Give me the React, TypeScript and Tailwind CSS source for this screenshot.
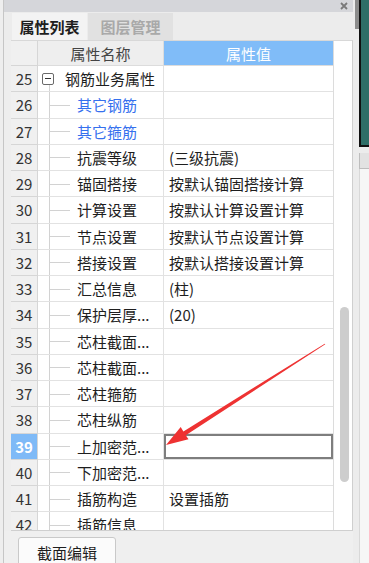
import React from 'react';

type Row = { n: number; name: string; value?: string; group?: boolean; blue?: boolean; selected?: boolean };

const rows: Row[] = [
  { n: 25, name: '钢筋业务属性', group: true },
  { n: 26, name: '其它钢筋', blue: true },
  { n: 27, name: '其它箍筋', blue: true },
  { n: 28, name: '抗震等级', value: '(三级抗震)' },
  { n: 29, name: '锚固搭接', value: '按默认锚固搭接计算' },
  { n: 30, name: '计算设置', value: '按默认计算设置计算' },
  { n: 31, name: '节点设置', value: '按默认节点设置计算' },
  { n: 32, name: '搭接设置', value: '按默认搭接设置计算' },
  { n: 33, name: '汇总信息', value: '(柱)' },
  { n: 34, name: '保护层厚...', value: '(20)' },
  { n: 35, name: '芯柱截面...' },
  { n: 36, name: '芯柱截面...' },
  { n: 37, name: '芯柱箍筋' },
  { n: 38, name: '芯柱纵筋' },
  { n: 39, name: '上加密范...', selected: true },
  { n: 40, name: '下加密范...' },
  { n: 41, name: '插筋构造', value: '设置插筋' },
  { n: 42, name: '插筋信息' },
];

function DataRow({ r }: { r: Row }) {
  return (
    <div className="flex h-[26.25px] shrink-0">
      <div
        className={
          'w-[27px] shrink-0 flex items-center justify-center border-r border-b border-[#d6d6d6] leading-none ' +
          (r.selected ? 'bg-[#7fbaf7] text-white font-semibold' : 'bg-[#f0f0f0] text-[#333]')
        }
      >
        {r.n}
      </div>
      <div className="w-[126px] shrink-0 relative flex items-center border-r border-b border-[#e2e2e2] leading-none">
        {r.group ? (
          <>
            <div className="absolute left-[4px] top-1/2 -translate-y-1/2 w-[12px] h-[12px] border border-[#6a6a6a] rounded-[2px] bg-white flex items-center justify-center">
              <div className="w-[6px] h-px bg-[#333]" />
            </div>
            <div className="absolute left-[11px] top-[19px] bottom-0 w-px bg-[#d2d2d2]" />
            <span className="pl-[27px] text-[#1e1e1e]">{r.name}</span>
          </>
        ) : (
          <>
            <div className="absolute left-[11px] top-0 bottom-0 w-px bg-[#d2d2d2]" />
            <div className="absolute left-[12px] top-1/2 w-[20px] h-px bg-[#d2d2d2]" />
            <span className={'pl-[39px] ' + (r.blue ? 'text-[#3570ee]' : 'text-[#1e1e1e]')}>{r.name}</span>
          </>
        )}
      </div>
      <div
        className={
          'w-[169px] shrink-0 flex items-center pl-[5px] border-b border-[#e2e2e2] leading-none text-[#1e1e1e] ' +
          (r.selected ? 'shadow-[inset_0_0_0_2px_#7e7e7e]' : '')
        }
      >
        {r.value ?? ''}
      </div>
    </div>
  );
}

export default function App() {
  return (
    <div className="relative w-[369px] h-[563px] overflow-hidden flex bg-[#ececec] text-[15px] font-['Noto_Sans_CJK_SC','Noto_Sans',sans-serif]">
      {/* left panel */}
      <div className="w-[353px] h-full pl-[3px] bg-[#eeeeee] shrink-0">
        <div className="h-full border-l border-[#c6c6c6] flex flex-col">
          {/* title bar */}
          <div className="h-[12px] shrink-0 bg-[#d5d6da] flex justify-end items-center pr-[5px]">
            <svg width="8" height="8" viewBox="0 0 8 8">
              <path d="M1 1 L7 7 M7 1 L1 7" stroke="#7a7a7a" strokeWidth="1.8" />
            </svg>
          </div>
          {/* tabs */}
          <div className="h-[28px] shrink-0 bg-[#ececec] flex items-stretch pl-[8px] pt-[1px]">
            <div className="w-[75px] flex items-center justify-center bg-[#f3f3f3] font-bold text-[#1e1e1e] leading-none">
              属性列表
            </div>
            <div className="w-[85px] ml-[1px] flex items-center justify-center bg-[#e1e1e1] font-bold text-[#a9a9a9] leading-none">
              图层管理
            </div>
          </div>
          {/* table */}
          <div className="flex-1 min-h-0 pl-[7px] flex">
            <div className="flex-1 flex border-t border-r border-b border-[#cfcfcf] border-t-[#d8d8d8] bg-white overflow-hidden">
              <div className="w-[322px] shrink-0 flex flex-col">
                <div className="flex h-[25px] shrink-0">
                  <div className="w-[27px] shrink-0 bg-[#f0f0f0] border-r border-b border-[#d6d6d6]" />
                  <div className="w-[126px] shrink-0 bg-[#eeeeee] border-r border-b border-[#dcdcdc] flex items-center justify-center text-[#444] leading-none">
                    属性名称
                  </div>
                  <div className="w-[169px] shrink-0 bg-[#80bcf8] border-b border-[#dcdcdc] flex items-center justify-center text-white leading-none">
                    属性值
                  </div>
                </div>
                {rows.map((r) => (
                  <DataRow key={r.n} r={r} />
                ))}
              </div>
              <div className="flex-1 border-l border-[#dcdcdc] bg-white pt-[266px] pl-[6px]">
                <div className="w-[9px] h-[175px] rounded-full bg-[#cdcdcd]" />
              </div>
            </div>
          </div>
          {/* bottom */}
          <div className="h-[32px] shrink-0 pl-[14px] pt-[6px] bg-[#efefef]">
            <div className="w-[98px] h-[34px] bg-[#fbfbfb] border border-[#c9c9c9] rounded-[3px] flex justify-center pt-[6px] leading-[18px] text-[#1e1e1e]">
              截面编辑
            </div>
          </div>
        </div>
      </div>
      {/* right strip */}
      <div className="w-[16px] h-full flex shrink-0">
        <div className="w-[6px] flex flex-col">
          <div className="h-[29px] ml-[2px] w-[4px] bg-[#8c8c8c]" />
        </div>
        <div className="w-[10px] flex flex-col">
          <div className="h-[147px] bg-[#2f6e67] border-l-2 border-b-2 border-[#111]" />
          <div className="mt-[6px] h-[16px] bg-[#e2e2e2] border-l border-b border-[#bdbdbd]" />
          <div className="flex-1 bg-[#f6f6f6] border-l border-[#d8d8d8]" />
        </div>
      </div>
      {/* red arrow annotation */}
      <svg className="absolute inset-0 pointer-events-none" width="369" height="563" viewBox="0 0 369 563">
        <polygon
          points="166,445 188.5,439.3 185.8,435.2 325.3,344.3 324.7,343.7 183.4,431.4 180.7,427.1"
          fill="#ee3232"
        />
      </svg>
    </div>
  );
}
